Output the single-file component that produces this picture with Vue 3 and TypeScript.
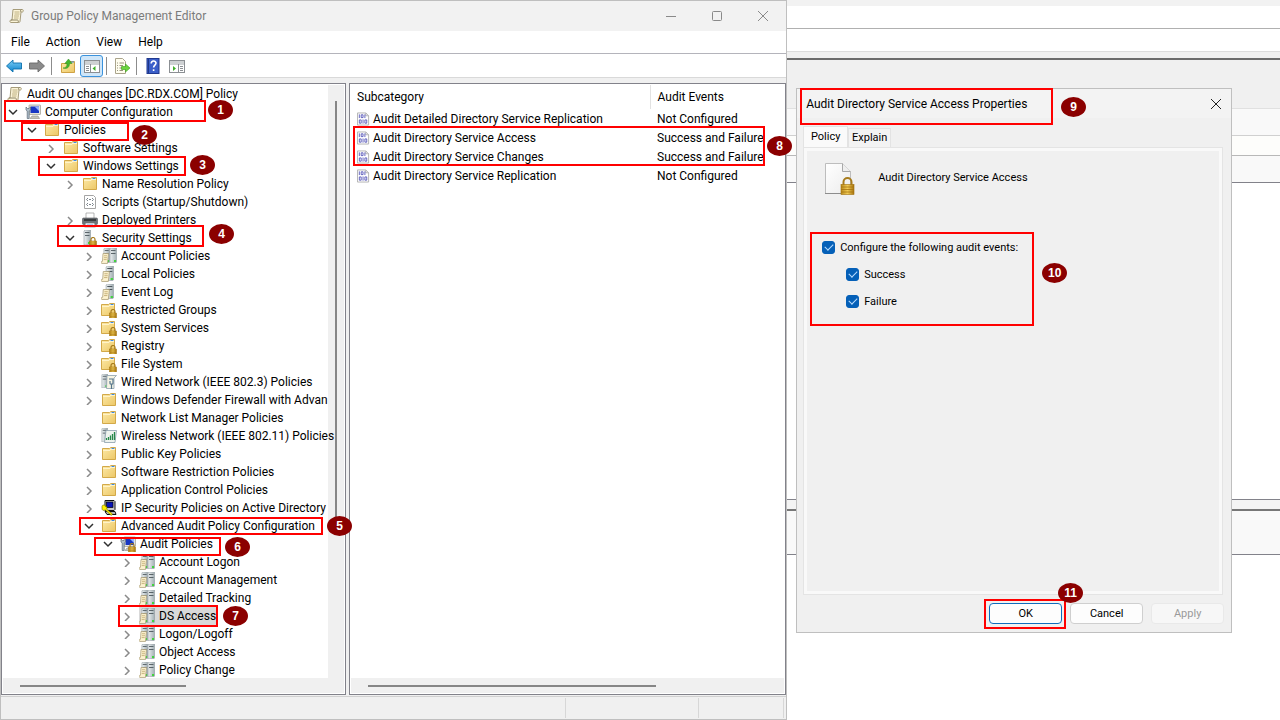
<script setup lang="ts">
import { ref } from 'vue'

type Twist = 'open' | 'closed' | 'none'
interface TreeRow { label: string; level: number; twist: Twist; icon: string; selected?: boolean }
interface Mark { n: number; x: number; y: number; w: number; h: number; bx: number; by: number }

const row = (level: number, twist: Twist, icon: string, label: string, selected = false): TreeRow =>
  ({ level, twist, icon, label, selected })

const tree: TreeRow[] = [
  row(0, 'none', 'scroll', 'Audit OU changes [DC.RDX.COM] Policy'),
  row(1, 'open', 'computer', 'Computer Configuration'),
  row(2, 'open', 'folder', 'Policies'),
  row(3, 'closed', 'folder', 'Software Settings'),
  row(3, 'open', 'folder', 'Windows Settings'),
  row(4, 'closed', 'folder', 'Name Resolution Policy'),
  row(4, 'none', 'script', 'Scripts (Startup/Shutdown)'),
  row(4, 'closed', 'printer', 'Deployed Printers'),
  row(4, 'open', 'serverlock', 'Security Settings'),
  row(5, 'closed', 'servers', 'Account Policies'),
  row(5, 'closed', 'server', 'Local Policies'),
  row(5, 'closed', 'server', 'Event Log'),
  row(5, 'closed', 'folderlock', 'Restricted Groups'),
  row(5, 'closed', 'folderlock', 'System Services'),
  row(5, 'closed', 'folderlock', 'Registry'),
  row(5, 'closed', 'folderlock', 'File System'),
  row(5, 'closed', 'wired', 'Wired Network (IEEE 802.3) Policies'),
  row(5, 'closed', 'folder', 'Windows Defender Firewall with Advan'),
  row(5, 'none', 'folder', 'Network List Manager Policies'),
  row(5, 'closed', 'wireless', 'Wireless Network (IEEE 802.11) Policies'),
  row(5, 'closed', 'folder', 'Public Key Policies'),
  row(5, 'closed', 'folder', 'Software Restriction Policies'),
  row(5, 'closed', 'folder', 'Application Control Policies'),
  row(5, 'closed', 'ipsec', 'IP Security Policies on Active Directory'),
  row(5, 'open', 'folder', 'Advanced Audit Policy Configuration'),
  row(6, 'open', 'computerlock', 'Audit Policies'),
  row(7, 'closed', 'servers', 'Account Logon'),
  row(7, 'closed', 'servers', 'Account Management'),
  row(7, 'closed', 'servers', 'Detailed Tracking'),
  row(7, 'closed', 'servers', 'DS Access', true),
  row(7, 'closed', 'servers', 'Logon/Logoff'),
  row(7, 'closed', 'servers', 'Object Access'),
  row(7, 'closed', 'servers', 'Policy Change'),
]
const indent = (level: number) => (level === 0 ? 4 : (level - 1) * 19 + 3)

const subcategories = [
  ['Audit Detailed Directory Service Replication', 'Not Configured'],
  ['Audit Directory Service Access', 'Success and Failure'],
  ['Audit Directory Service Changes', 'Success and Failure'],
  ['Audit Directory Service Replication', 'Not Configured'],
]

const windowMarks: Mark[] = [
  { n: 1, x: 4, y: 100, w: 202, h: 22, bx: 208, by: 100 },
  { n: 2, x: 21, y: 122, w: 108, h: 19, bx: 132, by: 125 },
  { n: 3, x: 38, y: 156, w: 148, h: 20, bx: 190, by: 155 },
  { n: 4, x: 57, y: 225, w: 147, h: 22, bx: 209, by: 224 },
  { n: 5, x: 79, y: 517, w: 244, h: 18, bx: 327, by: 516 },
  { n: 6, x: 94, y: 537, w: 127, h: 19, bx: 225, by: 537 },
  { n: 7, x: 118, y: 605, w: 100, h: 22, bx: 223, by: 606 },
  { n: 8, x: 353, y: 126, w: 412, h: 40, bx: 767, by: 136 },
]
const dialogMarks: Mark[] = [
  { n: 9, x: 4, y: 0, w: 253, h: 37, bx: 265, by: 9 },
  { n: 10, x: 14, y: 144, w: 224, h: 94, bx: 246, by: 175 },
  { n: 11, x: 188, y: 511, w: 82, h: 30, bx: 262, by: 495 },
]
const boxStyle = (m: Mark) => ({ left: `${m.x}px`, top: `${m.y}px`, width: `${m.w}px`, height: `${m.h}px` })
const badgeStyle = (m: Mark) => ({ left: `${m.bx}px`, top: `${m.by}px` })

const configure = ref(true)
const success = ref(true)
const failure = ref(true)
</script>

<template>
  <div class="desktop">
    <svg class="defs" aria-hidden="true">
      <defs>
        <linearGradient id="gf" x1="0" y1="0" x2="1" y2="1"><stop offset="0" stop-color="#fdeaa8" /><stop offset="1" stop-color="#ecc766" /></linearGradient>
        <linearGradient id="gl" x1="0" y1="0" x2="1" y2="0"><stop offset="0" stop-color="#b98a1c" /><stop offset=".5" stop-color="#f2cc55" /><stop offset="1" stop-color="#a87510" /></linearGradient>
        <linearGradient id="gs" x1="0" y1="0" x2="1" y2="0"><stop offset="0" stop-color="#eef2f3" /><stop offset="1" stop-color="#a3afb4" /></linearGradient>
        <linearGradient id="gb" x1="0" y1="0" x2="0" y2="1"><stop offset="0" stop-color="#7fd0f7" /><stop offset="1" stop-color="#0a82cc" /></linearGradient>
        <linearGradient id="gp" x1="0" y1="0" x2="1" y2="1"><stop offset="0" stop-color="#ffffff" /><stop offset="1" stop-color="#ececec" /></linearGradient>
        <symbol id="lock" viewBox="0 0 8 9"><path d="M2 4V2.500a2 2 0 0 1 4 0V4" fill="none" stroke="#a77c1e" stroke-width="1.2" /><rect x=".5" y="4" width="7" height="5" fill="url(#gl)" stroke="#a0700c" stroke-width=".5" /><path d="M1 6h6M1 7.600h6" stroke="#9b6d10" stroke-width=".5" /></symbol>
        <symbol id="scroll" viewBox="0 0 16 16"><path d="M4 1.500h9.500c1 0 1 2.500 0 2.500H12l-1 9.500c-.2 1-1 1-1.500 1H2c-1.500 0-1.500-2.500 0-2.500h1z" fill="#fbf4d8" stroke="#a69c7a" /><path d="M5.500 4h5M5.500 6h5M5 8h5M5 10h4.500" stroke="#b7a878" stroke-width=".9" /><path d="M2 12h6.500c1 0 1 2.300.5 2.500M12 4c-.7-.7-.7-2 .5-2.500" fill="none" stroke="#8d8465" /></symbol>
        <symbol id="folder" viewBox="0 0 16 16"><path d="M1.500 2.500h7l1.500-1h4.500v12h-13z" fill="url(#gf)" stroke="#d3a949" /><path d="M10 2h4v2h-5z" fill="#fffdf0" /><path d="M10.500 2.500h3" stroke="#3f8be0" /><path d="M2 4.500h7l1-1h4" fill="none" stroke="#fff3c9" /></symbol>
        <symbol id="folderlock" viewBox="0 0 16 16"><use href="#folder" x="-1" y="0" width="16" height="16" /><use href="#lock" x="8" y="7" width="8" height="9" /></symbol>
        <symbol id="onebox" viewBox="0 0 8 15" preserveAspectRatio="none"><path d="M1 1l1-1h5.500v14l-1 1H1z" fill="url(#gs)" stroke="#8d999f" stroke-width=".6" /><path d="M2 2.500h4.500M2 5.500h4.500" stroke="#4d585e" stroke-width=".9" /><rect x="5" y="12" width="2" height="2" fill="#41d33e" /></symbol>
        <symbol id="note" viewBox="0 0 8 10" preserveAspectRatio="none"><path d="M2 .5h5.500L6.500 9.500H.8C0 9.500 0 7.500 1 7.500h.5z" fill="#fdf3d0" stroke="#a89a72" stroke-width=".7" /><path d="M3 2.500h3M3 4.300h3M2.700 6h3" stroke="#b79f63" stroke-width=".7" /></symbol>
        <symbol id="servers" viewBox="0 0 16 16"><use href="#onebox" x="2" y="0" width="7" height="15" /><use href="#onebox" x="8" y="0" width="8" height="15" /><use href="#note" x="0" y="5" width="8" height="11" /></symbol>
        <symbol id="server" viewBox="0 0 16 16"><use href="#onebox" x="4" y="0" width="9" height="15" /><use href="#note" x="0" y="5" width="9" height="11" /></symbol>
        <symbol id="serverlock" viewBox="0 0 16 16"><use href="#onebox" x="1" y="0" width="8" height="15" /><use href="#lock" x="7" y="7" width="8" height="9" /></symbol>
        <symbol id="computer" viewBox="0 0 16 16"><rect x="4" y="1" width="11.500" height="9.500" rx=".5" fill="#e4e4da" stroke="#9b9b92" stroke-width=".7" /><rect x="5.500" y="2.500" width="8.500" height="6.500" fill="#1737c4" /><path d="M9.500 2.500H14V7z" fill="#91b2ff" /><path d="M7 12h6l1.500 2.500H5z" fill="#c4c4bb" stroke="#8e8e86" stroke-width=".6" /><path d="M1 3v3l1.200 1v7.500h2V7L5.500 6V3L4 4.500H2.500z" fill="#aebdc9" stroke="#5d6c78" stroke-width=".7" /></symbol>
        <symbol id="computerlock" viewBox="0 0 16 16"><use href="#computer" width="16" height="16" /><use href="#lock" x="8" y="7" width="8" height="9" /></symbol>
        <symbol id="script" viewBox="0 0 16 16"><path d="M2.500 1.500h9l2 2v11h-11z" fill="#fff" stroke="#a5a5a5" /><path d="M6 4L4.500 5.500 6 7M10 4l1.500 1.500L10 7M7 5.500h2M6 9l-1.500 1.500L6 12M10 9l1.500 1.500L10 12M7 10.500h2" fill="none" stroke="#6d7780" stroke-width=".9" /></symbol>
        <symbol id="printer" viewBox="0 0 16 16"><path d="M4 1h8v6H4z" fill="#fff" stroke="#999" stroke-width=".7" /><rect x=".5" y="6" width="15" height="6.500" rx="1" fill="#6c7176" stroke="#505459" stroke-width=".6" /><path d="M2 8h12" stroke="#292b2e" stroke-width="1.500" /><path d="M3.500 11h9l1 4H2.500z" fill="#e9f1fb" stroke="#777" stroke-width=".6" /><path d="M5 13h6" stroke="#69a7e4" /></symbol>
        <symbol id="wired" viewBox="0 0 16 16"><use href="#onebox" x="0" y="0" width="7" height="14" /><path d="M6 1.500h9.500L13 4v10.500H5.500z" fill="#f6f4e4" stroke="#8ba0ad" stroke-width=".8" /><path d="M8 5h4v4.500c0 1-3 1-3 0V7M10.500 10v5" fill="none" stroke="#54748b" stroke-width="1.200" /></symbol>
        <symbol id="wireless" viewBox="0 0 16 16"><use href="#onebox" x="0" y="0" width="7" height="14" /><path d="M5 2.500h10.500L14 14.500H3.500z" fill="#eef3ee" stroke="#8ba0ad" stroke-width=".8" /><path d="M5.500 12v-2M7.500 12V9M9.500 12V7.500M11.500 12V6M13.500 12V4" stroke="#26894a" stroke-width="1.300" /></symbol>
        <symbol id="ipsec" viewBox="0 0 16 16"><path d="M4 .5h9l1 1v8l-1 1H4z" fill="#c9c9c9" stroke="#111" /><rect x="5.500" y="2" width="6.500" height="5.500" fill="#0a14b8" stroke="#000" stroke-width=".7" /><path d="M4 11.500h10l1 3H6z" fill="#b8b8b8" stroke="#111" /><path d="M1 6.500c0-2 3.500-2 3.500 0 2 0 1.500 2 1 2.500l6 5-1.200 1.500-6-5.500C2 11 1 10 1 8.500z" fill="#fff000" stroke="#6c6700" stroke-width=".6" /></symbol>
        <symbol id="bits" viewBox="0 0 14 16"><path d="M.5 1.500h9l3 3v10H.5z" fill="#fff" stroke="#b0b0b0" /><path d="M9.500 1.500v3h3" fill="none" stroke="#b0b0b0" /><g fill="none" stroke="#4b4bb4" stroke-width=".9"><path d="M2.500 3v4M8.500 3v4M4.500 3.500h2v3h-2zM2.500 9h2v3.500h-2zM6.500 8.500v4.500M8.500 9h2v3.500h-2z" /></g></symbol>
      </defs>
    </svg>

    <div class="backdrop" aria-hidden="true">
      <i class="b1"></i><i class="b2"></i><i class="b3"></i><i class="b4"></i><i class="b5"></i><i class="b6"></i>
      <i class="b7"></i><i class="b8"></i><i class="b9"></i><i class="b10"></i><i class="b11"></i>
    </div>

    <main class="editor">
      <header class="titlebar">
        <svg class="ico"><use href="#scroll" /></svg>
        <h1>Group Policy Management Editor</h1>
        <div class="caption">
          <button aria-label="Minimize"><svg viewBox="0 0 12 12"><path d="M1 6.500h10" /></svg></button>
          <button aria-label="Maximize"><svg viewBox="0 0 12 12"><rect x="1.500" y="1.500" width="9" height="9" rx="1" /></svg></button>
          <button aria-label="Close"><svg viewBox="0 0 12 12"><path d="M1 1l10 10M11 1L1 11" /></svg></button>
        </div>
      </header>
      <nav class="menu">
        <button>File</button><button>Action</button><button>View</button><button>Help</button>
      </nav>
      <div class="toolbar">
        <button aria-label="Back"><svg viewBox="0 0 16 16"><path d="M.5 8l6.500-6V5h8.500v6H7v3z" fill="url(#gb)" stroke="#0b70ad" stroke-width=".9" /></svg></button>
        <button aria-label="Forward"><svg viewBox="0 0 16 16"><path d="M15.500 8L9 2V5H.5v6H9v3z" fill="#8b8b8b" stroke="#6a6a6a" stroke-width=".9" /></svg></button>
        <i class="sep"></i>
        <button class="wide" aria-label="Up one level"><svg viewBox="0 0 16 16"><path d="M1.500 5.500h6l1.500-2h5.500v11h-13z" fill="url(#gf)" stroke="#cfa245" /><path d="M11 4h3" stroke="#3f8be0" /><path d="M3 10c3 0 4-1.500 4-4.500H4.800L8.500 1l3.500 4.500H9.500C9.500 9 7.500 11.500 3 10z" fill="#45b72e" stroke="#2b8b1a" stroke-width=".5" /></svg></button>
        <button class="on" aria-label="Show console tree"><svg viewBox="0 0 16 16"><rect x=".5" y="2.500" width="15" height="12" fill="#fff" stroke="#8b8f93" /><path d="M1 4h14M1 6h14" stroke="#9da3a8" stroke-width="1.200" /><path d="M6.500 6v8.500M2 8.500h3M2 10.500h3M2 12.500h3" stroke="#8b8f93" /><path d="M11.500 8v5L8.500 10.500z" fill="#3fae2a" /></svg></button>
        <i class="sep"></i>
        <button aria-label="Export list"><svg viewBox="0 0 16 16"><path d="M1.500.5h7l3 3v12h-10z" fill="#fffdee" stroke="#aaa48c" /><path d="M3 5h1M5.500 5H10M3 7.500h1M5.500 7.500H9M3 10h1M5.500 10H8M3 12.500h1M5.500 12.500H9" stroke="#8d8870" stroke-width=".9" /><path d="M7.500 8.500h4V6l4.500 4-4.500 4v-2.500h-4z" fill="#6cd63f" stroke="#3a9c1c" stroke-width=".6" /></svg></button>
        <i class="sep"></i>
        <button class="wide" aria-label="Help"><svg viewBox="0 0 16 16"><rect x="2" y=".5" width="12" height="15" fill="#3b5fc9" stroke="#20398f" /><path d="M3.500 1v14" stroke="#1f3788" /><path d="M6.200 5.500c0-3.200 4.800-3.200 4.800-.4 0 2-2.400 2-2.400 4.400M8.600 11.200v1.800" fill="none" stroke="#fff" stroke-width="1.600" /></svg></button>
        <button aria-label="Show action pane"><svg viewBox="0 0 16 16"><rect x=".5" y="2.500" width="15" height="12" fill="#fff" stroke="#8b8f93" /><path d="M1 4h14M1 6h14" stroke="#9da3a8" stroke-width="1.200" /><path d="M9.500 6v8.500M11 8.500h3M11 10.500h3M11 12.500h3" stroke="#8b8f93" /><path d="M4 8v5l3-2.500z" fill="#3fae2a" /></svg></button>
      </div>

      <div class="panes">
        <section class="pane tree-pane">
          <div class="tree-area">
            <ul class="tree" role="tree">
              <li v-for="r in tree" :key="r.label" role="treeitem" :aria-level="r.level + 1" :aria-selected="r.selected" :style="{ paddingLeft: indent(r.level) + 'px' }">
                <span v-if="r.level > 0" class="twist">
                  <svg v-if="r.twist === 'open'" class="open" viewBox="0 0 10 10"><path d="M1 3l4 4 4-4" /></svg>
                  <svg v-else-if="r.twist === 'closed'" viewBox="0 0 10 10"><path d="M3 2l4 4-4 4" /></svg>
                </span>
                <span class="node" :class="{ selected: r.selected, root: r.level === 0 }"><svg class="ico"><use :href="'#' + r.icon" /></svg><span>{{ r.label }}</span></span>
              </li>
            </ul>
            <div class="vbar"><i></i></div>
          </div>
          <div class="hbar"><i></i></div>
        </section>
        <section class="pane list-pane">
          <div class="list-area">
            <table>
              <thead><tr><th>Subcategory</th><th>Audit Events</th></tr></thead>
              <tbody>
                <tr v-for="s in subcategories" :key="s[0]">
                  <td><span class="item"><svg class="bits"><use href="#bits" /></svg>{{ s[0] }}</span></td>
                  <td>{{ s[1] }}</td>
                </tr>
              </tbody>
            </table>
          </div>
          <div class="hbar long"><i></i></div>
        </section>
      </div>
      <footer class="status"><i></i><i></i><i></i></footer>

      <div v-for="m in windowMarks" :key="m.n">
        <div class="mark" :style="boxStyle(m)"></div>
        <span class="badge" :style="badgeStyle(m)">{{ m.n }}</span>
      </div>
    </main>

    <section class="dialog" role="dialog" aria-labelledby="dlg-title">
      <header>
        <h2 id="dlg-title">Audit Directory Service Access Properties</h2>
        <button aria-label="Close dialog"><svg viewBox="0 0 12 12"><path d="M1 1l10 10M11 1L1 11" /></svg></button>
      </header>
      <div class="tabs" role="tablist">
        <button class="tab current" role="tab" aria-selected="true">Policy</button>
        <button class="tab" role="tab" aria-selected="false">Explain</button>
      </div>
      <div class="panel" role="tabpanel">
        <div class="subject">
          <svg viewBox="0 0 32 34"><path d="M1.500 1.500h17l8 8v22h-25z" fill="url(#gp)" stroke="#bdbdbd" /><path d="M18.500 1.500v8h8" fill="#eee" stroke="#a8a8a8" /><path d="M1 31.500h16" stroke="#8d8d8d" /><path d="M19.500 23v-3a4 4 0 0 1 8 0v3" fill="none" stroke="#a77c1e" stroke-width="2" /><rect x="17" y="22.500" width="13" height="10" fill="url(#gl)" stroke="#a0700c" stroke-width=".6" /><path d="M17 25h13M17 27.500h13M17 30h13" stroke="#a67410" stroke-width=".8" /></svg>
          <span>Audit Directory Service Access</span>
        </div>
        <div class="checks">
          <label><input v-model="configure" type="checkbox"><span>Configure the following audit events:</span></label>
          <label class="sub"><input v-model="success" type="checkbox"><span>Success</span></label>
          <label class="sub"><input v-model="failure" type="checkbox"><span>Failure</span></label>
        </div>
      </div>
      <div class="actions">
        <button class="default">OK</button><button>Cancel</button><button disabled>Apply</button>
      </div>
      <div v-for="m in dialogMarks" :key="m.n">
        <div class="mark" :style="boxStyle(m)"></div>
        <span class="badge" :style="badgeStyle(m)">{{ m.n }}</span>
      </div>
    </section>
  </div>
</template>

<style>
body { margin: 0; background: #fff; }
</style>

<style scoped>
* { box-sizing: border-box; }
.desktop { position: relative; min-height: 100vh; overflow: hidden; background: #fff; color: #000; font-family: Roboto, "Open Sans", sans-serif; font-size: 12px; line-height: 18px; }
.defs { position: absolute; width: 0; height: 0; }
button { font: inherit; color: inherit; border: 0; padding: 0; background: none; }
h1, h2 { margin: 0; font-size: 12px; font-weight: 400; }
.ico { width: 16px; height: 16px; flex: none; }

.backdrop { display: flex; flex-direction: column; }
.backdrop i { display: block; }
.b1 { height: 6px; background: #f2f2f2; }
.b2 { height: 23px; border-bottom: 1px solid #b0b0b0; }
.b3 { height: 23px; border-bottom: 1px solid #dcdcdc; }
.b4 { height: 8px; background: #f0f0f0; border-bottom: 2px solid #6b6b6b; }
.b5 { height: 49px; background: #f0f0f0; border-bottom: 1px solid #e0e0e0; }
.b6 { height: 27px; background: #f9f9f9; border-bottom: 1px solid #d0d0d0; }
.b7 { height: 20px; background: #fdfdfb; border-bottom: 1px solid #b8b8b8; }
.b8 { height: 27px; background: #f9f9f9; border-bottom: 1px solid #82828a; }
.b9 { height: 317px; border-bottom: 1px solid #82828a; }
.b10 { height: 11px; background: #f4f4f4; border-bottom: 2px solid #777; }
.b11 { height: 44px; background: #f9f9f9; border-bottom: 1px solid #82828a; }

.editor { position: absolute; inset: 0 auto 0 0; width: 61.5%; display: flex; flex-direction: column; background: #f0f0f0; border: 1px solid #bfbfbf; }
.titlebar { height: 30px; display: flex; align-items: center; gap: 6px; padding-left: 8px; background: #f2f2f2; color: #7b7b7b; }
.caption { margin-left: auto; display: flex; }
.caption button { width: 46px; height: 28px; display: grid; place-items: center; }
.caption svg, .dialog header svg { width: 12px; height: 12px; fill: none; stroke: #8a8a8a; }
.menu { height: 23px; display: flex; gap: 16px; padding-left: 10px; background: #fff; border-bottom: 1px solid #b4b4bb; }
.toolbar { height: 24px; display: flex; align-items: center; padding: 1px 0 0 1px; background: #fff; border-bottom: 1px solid #d9d9d9; }
.toolbar button { width: 23px; height: 22px; display: grid; place-items: center; border: 1px solid transparent; border-radius: 3px; }
.toolbar button.wide { width: 25px; }
.toolbar button.on { background: #cfe6f9; border-color: #3b93dd; }
.toolbar svg { width: 16px; height: 16px; }
.sep { width: 1px; height: 18px; margin: 0 3px; background: #8c8c8c; }

.panes { flex: 1; min-height: 0; display: flex; gap: 3px; padding: 5px 0 1px; }
.pane { display: flex; flex-direction: column; background: #fff; border: 1px solid #82828a; padding: 1px; min-width: 0; }
.tree-pane { width: 345px; flex: none; }
.list-pane { flex: 1; }
.tree-area { flex: 1; min-height: 0; display: flex; }
.tree { flex: 1; min-width: 0; position: relative; z-index: 1; list-style: none; margin: 0; padding: 0; }
.tree li { display: flex; height: 18px; white-space: nowrap; }
.twist { width: 14px; margin-right: 5px; display: grid; place-items: center; flex: none; }
.twist svg { width: 10px; height: 10px; fill: none; stroke: #8a8a8a; stroke-width: 1.500; }
.twist svg.open { stroke: #303030; }
.node { display: flex; align-items: center; gap: 4px; padding-right: 1px; }
.node.selected { background: #d9d9d9; }
.vbar { width: 16px; background: #f0f0f0; padding: 16px 7px 160px; display: flex; flex: none; }
.vbar i { width: 2px; background: #868686; }
.hbar { height: 15px; background: #f0f0f0; display: flex; align-items: center; padding-left: 17px; flex: none; }
.hbar i { width: 166px; height: 2px; background: #868686; }
.hbar.long i { width: 288px; }
.list-area { flex: 1; }
table { width: 100%; border-collapse: collapse; table-layout: fixed; }
th, td { padding: 0 0 0 6px; text-align: left; font-weight: 400; white-space: nowrap; height: 19px; }
th { height: 24px; }
th:first-child { width: 299px; border-right: 1px solid #e2e2e2; }
th:last-child, td:last-child { padding-left: 7px; }
.item { display: flex; align-items: center; gap: 3px; }
.bits { width: 13px; height: 16px; }
.status { height: 23px; border-top: 1px solid #d0d0d0; display: flex; justify-content: flex-end; padding: 1px 2px 1px 1px; }
.status i { border-right: 1px solid #d7d7d7; width: 133px; }
.status i:last-child { width: 85px; }

.dialog { position: absolute; left: 62.2%; top: 88px; width: 436px; display: flex; flex-direction: column; background: #f0f0f0; border: 1px solid #bfbfbf; }
.dialog header { height: 29px; display: flex; align-items: center; justify-content: space-between; padding: 0 9px; background: #f3f3f3; }
.dialog header svg { stroke: #222; display: block; }
.tabs { display: flex; align-items: flex-end; padding: 8px 6px 0; height: 29px; }
.tabs, .panel, .actions { font-size: 11px; }
.tab { height: 19px; width: 43px; border: 1px solid #e3e3e3; border-bottom: 0; background: #f3f3f3; }
.tab.current { height: 21px; width: 45px; background: #fafafa; }
.panel { margin: 0 8px 0 6px; height: 448px; border: 1px solid #e4e4e4; outline: 3px solid #f9f9f9; outline-offset: -4px; }
.subject { display: flex; align-items: flex-start; padding: 14px 0 0 20px; gap: 22px; line-height: 32px; }
.subject svg { width: 32px; height: 34px; }
.checks { display: flex; flex-direction: column; gap: 7px; padding: 41px 0 0 18px; line-height: 18px; }
.checks label { display: flex; align-items: center; gap: 5px; }
.checks label span { padding-top: 2px; }
.checks .sub { padding-left: 24px; }
input { appearance: none; width: 13px; height: 13px; margin: 0; border-radius: 3px; border: 1px solid #777; background: #fff; display: grid; place-items: center; }
input:checked { background: #0560b8; border-color: #0560b8; }
input:checked::after { content: ""; width: 7px; height: 4px; border: solid #b9dcff; border-width: 0 0 1px 1px; transform: rotate(-45deg) translate(1px, -1px); }
.actions { display: flex; justify-content: flex-end; gap: 8px; padding: 8px 7px; }
.actions button { width: 73px; height: 21px; background: #fdfdfd; border: 1px solid #cfcfcf; border-radius: 4px; }
.actions .default { border-color: #0f6cbd; }
.actions button:disabled { color: #9a9a9a; background: #f7f7f7; border-color: #e9e9e9; }

.mark { position: absolute; z-index: 2; border: 2px solid #f00; pointer-events: none; margin: -1px 0 0 -1px; }
.badge { position: absolute; z-index: 2; width: 25px; height: 20px; margin: -1px 0 0 -1px; border-radius: 50%; background: #8b0000; color: #fff; font: 700 12px/20px "Liberation Sans", sans-serif; text-align: center; }
</style>
